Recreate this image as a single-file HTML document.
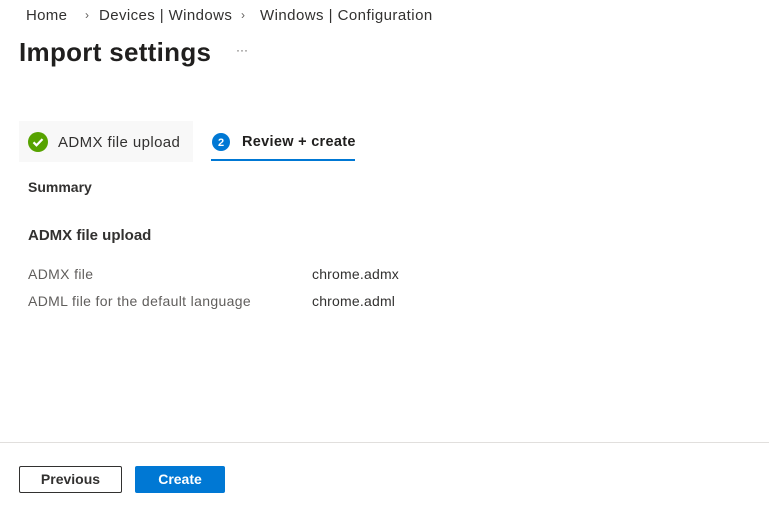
<!DOCTYPE html>
<html><head><meta charset="utf-8"><style>
*{margin:0;padding:0;box-sizing:border-box}
body{width:769px;height:506px;background:#fff;font-family:"Segoe UI","Liberation Sans",sans-serif;color:#323130;position:relative;overflow:hidden}
.a{position:absolute;white-space:nowrap}
</style></head><body>
<div class="a" style="left:26px;top:7px;font-size:15px;letter-spacing:0.3px;color:#323130">Home</div>
<div class="a" style="left:85px;top:8px;font-size:12px;color:#605e5c">›</div>
<div class="a" style="left:99px;top:7px;font-size:15px;letter-spacing:0.4px">Devices | Windows</div>
<div class="a" style="left:241px;top:8px;font-size:12px;color:#605e5c">›</div>
<div class="a" style="left:260px;top:7px;font-size:15px;letter-spacing:0.45px">Windows | Configuration</div>
<div class="a" style="left:19px;top:37px;font-size:26px;font-weight:600;letter-spacing:0.3px;color:#201f1e">Import settings</div>
<div class="a" style="left:236px;top:43px;font-size:12px;color:#605e5c">···</div>

<div class="a" style="left:19px;top:121px;width:174px;height:41px;background:#f8f8f8"></div>
<svg class="a" style="left:28px;top:132px" width="20" height="20" viewBox="0 0 20 20"><circle cx="10" cy="10" r="10" fill="#57a300"/><path d="M5.5 10.3l3 3 6-6.2" stroke="#fff" stroke-width="2.2" fill="none"/></svg>
<div class="a" style="left:58px;top:134px;font-size:15px;letter-spacing:0.4px;color:#323130">ADMX file upload</div>
<svg class="a" style="left:211px;top:132px" width="20" height="20" viewBox="0 0 20 20"><circle cx="10" cy="10" r="9" fill="#0078d4"/><text x="10" y="14" font-size="11" font-weight="700" fill="#fff" text-anchor="middle" font-family="Liberation Sans">2</text></svg>
<div class="a" style="left:242px;top:134px;font-size:14.5px;font-weight:600;letter-spacing:0.3px;color:#201f1e">Review + create</div>
<div class="a" style="left:211px;top:159px;width:144px;height:2px;background:#0078d4"></div>

<div class="a" style="left:28px;top:179px;font-size:14px;font-weight:600">Summary</div>
<div class="a" style="left:28px;top:227px;font-size:15px;font-weight:600">ADMX file upload</div>
<div class="a" style="left:28px;top:266px;font-size:14px;letter-spacing:0.35px;color:#605e5c">ADMX file</div>
<div class="a" style="left:312px;top:266px;font-size:14px;letter-spacing:0.2px;color:#323130">chrome.admx</div>
<div class="a" style="left:28px;top:293px;font-size:14px;letter-spacing:0.35px;color:#605e5c">ADML file for the default language</div>
<div class="a" style="left:312px;top:293px;font-size:14px;letter-spacing:0.2px;color:#323130">chrome.adml</div>

<div class="a" style="left:0;top:442px;width:769px;height:1px;background:#e1dfdd"></div>
<div class="a" style="left:19px;top:466px;width:103px;height:27px;border:1px solid #323130;border-radius:2px;font-size:14px;font-weight:600;text-align:center;line-height:25px">Previous</div>
<div class="a" style="left:135px;top:466px;width:90px;height:27px;background:#0078d4;border-radius:2px;color:#fff;font-size:14px;font-weight:600;text-align:center;line-height:27px">Create</div>
</body></html>
